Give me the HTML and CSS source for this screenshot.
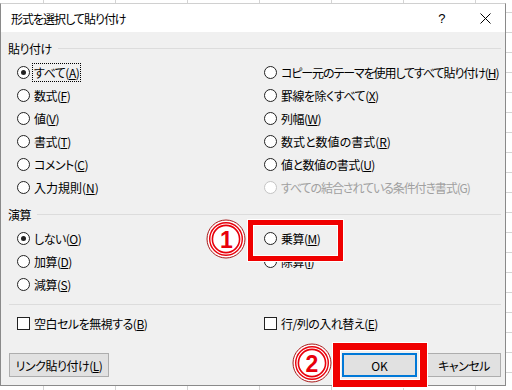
FILE: index.html
```html
<!DOCTYPE html>
<html lang="ja">
<head>
    <meta charset="UTF-8">
    <title>形式を選択して貼り付け</title>
    <link rel="stylesheet" href="styles.css">
</head>
<body>
    <div class="dialog">
        <div class="titlebar">
            <span class="title">形式を選択して貼り付け</span>
            <span class="help">?</span>
            <svg class="close" width="11" height="11" viewBox="0 0 11 11">
                <path d="M0.5 0.5 L10.5 10.5 M10.5 0.5 L0.5 10.5" stroke="#000" stroke-width="1" fill="none"/>
            </svg>
        </div>

        <div class="content">
            <div class="group-head first"><span>貼り付け</span><i></i></div>
            <div class="options">
                <div class="opt"><span class="radio on"></span><span class="label focus">すべて(<u>A</u>)</span></div>
                <div class="opt"><span class="radio"></span><span class="label tight">コピー元のテーマを使用してすべて貼り付け(<u>H</u>)</span></div>
                <div class="opt"><span class="radio"></span><span class="label">数式(<u>F</u>)</span></div>
                <div class="opt"><span class="radio"></span><span class="label">罫線を除くすべて(<u>X</u>)</span></div>
                <div class="opt"><span class="radio"></span><span class="label">値(<u>V</u>)</span></div>
                <div class="opt"><span class="radio"></span><span class="label">列幅(<u>W</u>)</span></div>
                <div class="opt"><span class="radio"></span><span class="label">書式(<u>T</u>)</span></div>
                <div class="opt"><span class="radio"></span><span class="label wide">数式と数値の書式(<u>R</u>)</span></div>
                <div class="opt"><span class="radio"></span><span class="label">コメント(<u>C</u>)</span></div>
                <div class="opt"><span class="radio"></span><span class="label">値と数値の書式(<u>U</u>)</span></div>
                <div class="opt"><span class="radio"></span><span class="label wide">入力規則(<u>N</u>)</span></div>
                <div class="opt disabled"><span class="radio"></span><span class="label tight">すべての結合されている条件付き書式(G)</span></div>
            </div>

            <div class="group-head"><span>演算</span><i></i></div>
            <div class="options">
                <div class="opt"><span class="radio on"></span><span class="label">しない(<u>O</u>)</span></div>
                <div class="opt"><span class="radio"></span><span class="label">乗算(<u>M</u>)</span></div>
                <div class="opt"><span class="radio"></span><span class="label">加算(<u>D</u>)</span></div>
                <div class="opt"><span class="radio"></span><span class="label">除算(<u>I</u>)</span></div>
                <div class="opt"><span class="radio"></span><span class="label">減算(<u>S</u>)</span></div>
            </div>

            <div class="separator"></div>

            <div class="options">
                <div class="opt"><span class="check"></span><span class="label">空白セルを無視する(<u>B</u>)</span></div>
                <div class="opt"><span class="check"></span><span class="label">行/列の入れ替え(<u>E</u>)</span></div>
            </div>

            <div class="buttons">
                <button class="btn link">リンク貼り付け(<u>L</u>)</button>
                <span class="spacer"></span>
                <button class="btn ok">OK</button>
                <button class="btn cancel">キャンセル</button>
            </div>
        </div>
    </div>

    <!-- annotations -->
    <div class="mark-box box1"></div>
    <div class="mark-box box2"></div>
    <svg class="num num1" width="40" height="40" viewBox="0 0 40 40">
        <circle cx="20" cy="20" r="19" fill="#fff" stroke="#a81818" stroke-width="1"/>
        <circle cx="20" cy="20" r="16.3" fill="none" stroke="#e8000b" stroke-width="1.4"/>
        <circle cx="20" cy="20" r="13.6" fill="none" stroke="#e8000b" stroke-width="1.6"/>
        <text x="20.5" y="28.5" class="num-text">1</text>
    </svg>
    <svg class="num num2" width="40" height="40" viewBox="0 0 40 40">
        <circle cx="20" cy="20" r="19" fill="#fff" stroke="#a81818" stroke-width="1"/>
        <circle cx="20" cy="20" r="16.3" fill="none" stroke="#e8000b" stroke-width="1.4"/>
        <circle cx="20" cy="20" r="13.6" fill="none" stroke="#e8000b" stroke-width="1.6"/>
        <text x="20" y="28.5" class="num-text">2</text>
    </svg>
</body>
</html>
```

FILE: styles.css
```css
body {
    margin: 0;
    padding-top: 3px;
    width: 512px;
    height: 390px;
    box-sizing: border-box;
    overflow: hidden;
    position: relative;
    background-color: #fff;
    background-image:
        linear-gradient(to right, #d4d4d4 1px, transparent 1px),
        linear-gradient(to bottom, #d4d4d4 1px, transparent 1px);
    background-size: 72px 20px;
    background-position: 43px 0, 0 12px;
    font-family: "Noto Sans CJK JP", sans-serif;
    font-size: 12px;
    font-feature-settings: "palt";
    letter-spacing: -0.5px;
    color: #000;
}

.dialog {
    width: 506px;
    height: 383px;
    box-sizing: border-box;
    border: 1px solid #8a8a8a;
    border-top-color: #d0d0d0;
    background-color: #f0f0f0;
}

.titlebar {
    height: 28px;
    background-color: #fff;
    display: flex;
    align-items: center;
    padding-left: 10px;
}

.title {
    flex: 1;
    letter-spacing: -1px;
}

.help {
    font-family: "Liberation Sans", sans-serif;
    font-size: 13px;
    margin-right: 35px;
}

.close {
    margin-right: 14px;
}

.content {
    padding: 0 4px 0 7px;
}

.group-head {
    display: flex;
    align-items: center;
    height: 16px;
    margin-top: 7px;
}

.group-head.first {
    margin-top: 8px;
}

.group-head i {
    flex: 1;
    height: 1px;
    background-color: #dcdcdc;
    margin-left: 6px;
}

.options {
    display: grid;
    grid-template-columns: 247px 1fr;
    padding-left: 9px;
    margin-top: 5px;
}

.opt {
    display: flex;
    align-items: center;
    height: 23px;
    white-space: nowrap;
}

.radio,
.check {
    width: 13px;
    height: 13px;
    box-sizing: border-box;
    border: 1px solid #222;
    background-color: #fff;
    display: flex;
    align-items: center;
    justify-content: center;
    flex-shrink: 0;
}

.radio {
    border-radius: 50%;
}

.radio.on::after {
    content: "";
    width: 5px;
    height: 5px;
    border-radius: 50%;
    background-color: #222;
}

.label {
    margin-left: 4px;
    line-height: 17px;
}

.label.tight {
    letter-spacing: -1.1px;
}

.label.wide {
    letter-spacing: 0;
}

.label.focus {
    outline: 1px dotted #000;
    margin-left: 3px;
    padding: 0 1px;
}

.opt.disabled .radio {
    border-color: #c4c4c4;
}

.opt.disabled .label {
    color: #a0a0a0;
}

.separator {
    height: 1px;
    background-color: #dcdcdc;
    margin: 8px 0 7px 1px;
}

.options + .options {
    margin-top: 0;
}

.separator + .options {
    margin-top: 0;
}

.buttons {
    display: flex;
    margin-top: 18px;
    padding-left: 1px;
}

.spacer {
    flex: 1;
}

.btn {
    height: 24px;
    box-sizing: border-box;
    background-color: #e1e1e1;
    border: 1px solid #adadad;
    font-family: inherit;
    font-size: 12px;
    font-feature-settings: "palt";
    letter-spacing: -0.5px;
    color: #000;
    padding: 0;
}

.btn.link {
    width: 100px;
}

.btn.ok {
    width: 75px;
    border: 2px solid #0078d7;
    margin-right: 10px;
    letter-spacing: 0;
}

.btn.cancel {
    width: 74px;
}

.mark-box {
    position: absolute;
    box-sizing: border-box;
    border: 5px solid #f00000;
    box-shadow: 0 0 0 1px #fff, inset 0 0 0 1px #fff;
}

.box1 {
    left: 248px;
    top: 220px;
    width: 95px;
    height: 41px;
}

.box2 {
    left: 333px;
    top: 343px;
    width: 94px;
    height: 44px;
    border-width: 7px;
}

.num {
    position: absolute;
}

.num1 {
    left: 206px;
    top: 219px;
}

.num2 {
    left: 292px;
    top: 343px;
}

.num-text {
    font-family: "Liberation Sans", sans-serif;
    font-weight: bold;
    font-size: 23px;
    letter-spacing: 0;
    text-anchor: middle;
    fill: #e8000b;
    stroke: #fff;
    stroke-width: 1.2px;
    paint-order: stroke;
}
```
